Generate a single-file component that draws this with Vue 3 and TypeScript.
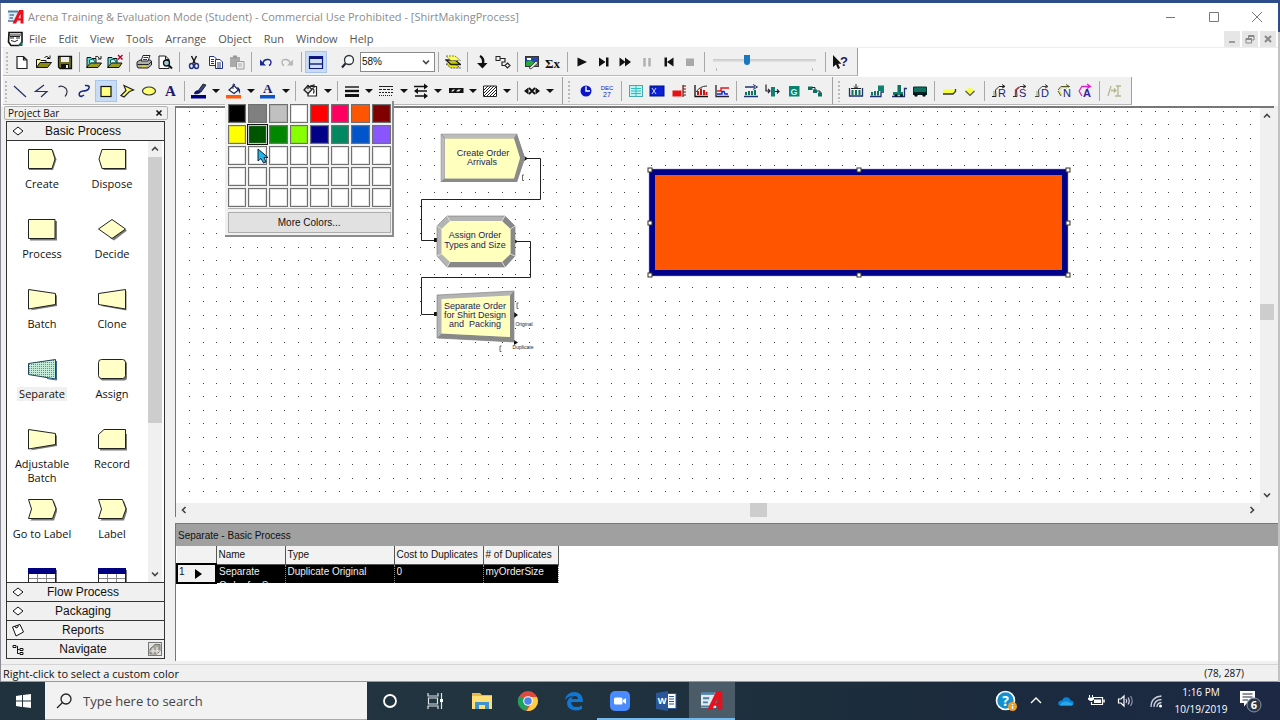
<script setup lang="ts">
import { ref } from 'vue'

interface Tool { icon: string; label: string; state?: 'on' | 'off' }
interface ModuleItem { icon: string; label: string; selected?: boolean }

const menus = ['File', 'Edit', 'View', 'Tools', 'Arrange', 'Object', 'Run', 'Window', 'Help']

const fileGroups: Tool[][] = [
  [{ icon: 'new', label: 'New' }, { icon: 'open', label: 'Open' }, { icon: 'save', label: 'Save' }],
  [{ icon: 'attach', label: 'Template attach' }, { icon: 'detach', label: 'Template detach' }],
  [{ icon: 'print', label: 'Print' }, { icon: 'preview', label: 'Print preview' }],
  [{ icon: 'cut', label: 'Cut' }, { icon: 'copy', label: 'Copy' }, { icon: 'paste', label: 'Paste', state: 'off' }],
  [{ icon: 'undo', label: 'Undo' }, { icon: 'redo', label: 'Redo', state: 'off' }],
  [{ icon: 'split', label: 'Toggle split screen', state: 'on' }],
]
const runGroups: Tool[][] = [
  [{ icon: 'layers', label: 'Layers' }],
  [{ icon: 'submodel', label: 'Submodel' }, { icon: 'connect', label: 'Connect' }],
  [{ icon: 'animate', label: 'Edit background' }, { icon: 'expr', label: 'Expression builder' }],
  [
    { icon: 'go', label: 'Go' }, { icon: 'step', label: 'Step' }, { icon: 'fast', label: 'Fast-forward' },
    { icon: 'pause', label: 'Pause', state: 'off' }, { icon: 'start', label: 'Start over' },
    { icon: 'stop', label: 'End', state: 'off' },
  ],
]
const drawTools: Tool[] = [
  { icon: 'line', label: 'Line' }, { icon: 'polyline', label: 'Polyline' }, { icon: 'arc', label: 'Arc' },
  { icon: 'bezier', label: 'Bezier curve' }, { icon: 'box', label: 'Box', state: 'on' },
  { icon: 'polygon', label: 'Polygon' }, { icon: 'ellipse', label: 'Ellipse' }, { icon: 'text', label: 'Text' },
]
const styleGroups: Tool[][] = [
  [{ icon: 'linecolor', label: 'Line color' }, { icon: 'fillcolor', label: 'Fill color' }, { icon: 'textcolor', label: 'Text color' }],
  [{ icon: 'background', label: 'Window background color' }],
  [
    { icon: 'linewidth', label: 'Line width' }, { icon: 'linestyle', label: 'Line style' },
    { icon: 'arrowstyle', label: 'Arrow style' }, { icon: 'linepattern', label: 'Line pattern' },
    { icon: 'fillpattern', label: 'Fill pattern' },
  ],
  [{ icon: 'showdim', label: 'Show dimensions' }],
]
const animateGroups: Tool[][] = [
  [{ icon: 'clock', label: 'Clock' }, { icon: 'date', label: 'Date' }],
  [
    { icon: 'variable', label: 'Variable' }, { icon: 'level', label: 'Level' }, { icon: 'thermo', label: 'Histogram' },
    { icon: 'histogram', label: 'Bar plot' }, { icon: 'plot', label: 'Plot' },
  ],
  [
    { icon: 'queue', label: 'Queue' }, { icon: 'resource', label: 'Resource' }, { icon: 'global', label: 'Global' },
    { icon: 'transporter', label: 'Entity' },
  ],
]
const transferGroups: Tool[][] = [
  [{ icon: 'storage', label: 'Storage' }, { icon: 'seize', label: 'Seize' }, { icon: 'parking', label: 'Parking' }, { icon: 'truck', label: 'Transporter' }],
  [{ icon: 'station', label: 'Station' }, { icon: 'intersection', label: 'Intersection' }],
  [{ icon: 'route', label: 'Route' }, { icon: 'segment', label: 'Segment' }, { icon: 'distance', label: 'Distance' }, { icon: 'network', label: 'Network' }, { icon: 'promote', label: 'Promote path' }],
  [{ icon: 'swap', label: 'Reverse path', state: 'off' }],
]

const swatches = [
  '#000000', '#808080', '#c0c0c0', '#ffffff', '#ff0000', '#ff0060', '#ff5500', '#800000',
  '#ffff00', '#005500', '#008800', '#88ff00', '#000088', '#008860', '#0055cc', '#8855ff',
  ...Array<string>(24).fill('#ffffff'),
]
const hovered = 9

const modules: ModuleItem[] = [
  { icon: 'm-create', label: 'Create' }, { icon: 'm-dispose', label: 'Dispose' },
  { icon: 'm-process', label: 'Process' }, { icon: 'm-decide', label: 'Decide' },
  { icon: 'm-batch', label: 'Batch' }, { icon: 'm-clone', label: 'Clone' },
  { icon: 'm-separate', label: 'Separate', selected: true }, { icon: 'm-assign', label: 'Assign' },
  { icon: 'm-batch', label: 'Adjustable Batch' }, { icon: 'm-record', label: 'Record' },
  { icon: 'm-label', label: 'Go to Label' }, { icon: 'm-label', label: 'Label' },
  { icon: 'm-table', label: '' }, { icon: 'm-table', label: '' },
]
const panels = [
  { icon: 'p-diamond', label: 'Flow Process' }, { icon: 'p-diamond', label: 'Packaging' },
  { icon: 'p-report', label: 'Reports' }, { icon: 'p-tree', label: 'Navigate' },
]

const handles = [649, 858, 1067].flatMap(x => [170, 223, 275].map(y => ({ x, y })))
  .filter(h => !(h.x === 858 && h.y === 223))

const apps = [
  { icon: 't-cortana', label: 'Cortana' }, { icon: 't-view', label: 'Task View' },
  { icon: 't-explorer', label: 'File Explorer' }, { icon: 't-chrome', label: 'Chrome' },
  { icon: 't-edge', label: 'Edge' }, { icon: 't-zoom', label: 'Zoom', open: true },
  { icon: 't-word', label: 'Word', open: true }, { icon: 'arena', label: 'Arena', open: true, active: true },
]
const tray = [
  { icon: 's-help', label: 'Get help' }, { icon: 's-up', label: 'Show hidden icons' },
  { icon: 's-cloud', label: 'OneDrive' }, { icon: 's-battery', label: 'Battery' },
  { icon: 's-sound', label: 'Volume' }, { icon: 's-wifi', label: 'Network' },
]

const zoomLevel = ref('58%')
const speed = ref(32)
const query = ref('')
</script>

<template>
  <div class="desktop">
    <svg class="sprite" aria-hidden="true">
      <symbol id="arena" viewBox="0 0 16 16">
        <rect x="0" y="2" width="11" height="11" fill="#dfeaf2" /><path d="M0 2.500H10" stroke="#4d83a5" stroke-width="2" />
        <path d="M1.500 6H6M1.500 9H5M0 12H8" stroke="#4d7f9f" stroke-width="1.400" />
        <path d="M11 1H15.500V14.500H12.500V11.500H9.500L8 14.500H4.500ZM12.500 5L10.500 9.300H12.500Z" fill="#e8101c" fill-rule="evenodd" />
      </symbol>
      <symbol id="doc" viewBox="0 0 16 16">
        <path d="M2 1.500H15V11L12 14.500H4L1.500 11Z" fill="#fff" stroke="#111" stroke-width="1.600" />
        <path d="M2 4H14M3 7H7M9 7H13M4 9.500Q8 12 11 9M3 5.500H13" stroke="#222" fill="none" />
        <path d="M11 15L15.500 10V15Z" fill="#087060" />
      </symbol>
      <symbol id="new" viewBox="0 0 16 16"><path d="M3 2.500H9.500L13 6V14.500H3ZM9.500 2.500V6H13" fill="#fff" stroke="#222" stroke-width="1.200" /></symbol>
      <symbol id="open" viewBox="0 0 16 16">
        <path d="M.5 13.500V5.500H4L5 6.500H10V8.500" fill="#ffff90" stroke="#111" /><path d="M.5 13.500L4 8.500H15.500L11.500 13.500Z" fill="#8a8a10" stroke="#111" />
        <path d="M8.500 3.500Q11 1 13 4M14 1.500V4.500H11" fill="none" stroke="#111" />
      </symbol>
      <symbol id="save" viewBox="0 0 16 16">
        <path d="M1.500 2.500H14.500V14.500H3L1.500 13Z" fill="#707020" stroke="#111" stroke-width="1.300" /><rect x="4" y="3" width="8" height="5" fill="#eee" /><rect x="4" y="10" width="8" height="4.500" fill="#111" /><rect x="9" y="11" width="2" height="3" fill="#eee" />
      </symbol>
      <symbol id="attach" viewBox="0 0 16 16">
        <path d="M1 13.500V3.500H5L6 4.500H10V9" fill="#60e0d8" stroke="#111" /><path d="M3.500 9V6L7 5L9 8" fill="#baf5f0" stroke="#155" />
        <path d="M.5 13.500L4.500 9H15.500L12 13.500Z" fill="#9a9a20" stroke="#111" /><path d="M9 3Q12 1 13.500 4.500M15 2V5H12" fill="none" stroke="#111" />
      </symbol>
      <symbol id="detach" viewBox="0 0 16 16">
        <path d="M1 13.500V3.500H5L6 4.500H10V9" fill="#60e0d8" stroke="#111" /><path d="M3.500 9V6L7 5L9 8" fill="#baf5f0" stroke="#155" />
        <path d="M.5 13.500L4.500 9H15L12 13.500Z" fill="#9a9a20" stroke="#111" /><path d="M11 1L15.500 5.500M15.500 1L11 5.500" stroke="#b00020" stroke-width="1.400" />
      </symbol>
      <symbol id="print" viewBox="0 0 16 16">
        <path d="M1 8L4 6H14L15.500 7V11L12 14H2L1 12Z" fill="#b0b0a8" stroke="#222" /><path d="M5 7L7 1.500H14L12 7Z" fill="#fff" stroke="#223" /><path d="M7.500 3.500H12M7 5.500H11" stroke="#335" />
        <path d="M1.500 10.500H12.500L15 8" stroke="#222" fill="none" /><rect x="6" y="11.500" width="4" height="1.500" fill="#e0d820" />
      </symbol>
      <symbol id="preview" viewBox="0 0 16 16">
        <path d="M2 2H8.500L12 5.500V14.500H2ZM8.500 2V5.500H12" fill="#fff" stroke="#222" /><circle cx="9.500" cy="9" r="3" fill="#9ccbd0" stroke="#111" stroke-width="1.300" /><path d="M12 11.500L15 14.500" stroke="#111" stroke-width="2" />
      </symbol>
      <symbol id="cut" viewBox="0 0 16 16">
        <path d="M5.500 2L9.500 10M10.500 2L6.500 10" stroke="#111" stroke-width="1.400" /><ellipse cx="5.500" cy="12" rx="2" ry="2.500" fill="none" stroke="#223080" stroke-width="1.400" /><ellipse cx="10.500" cy="12" rx="2" ry="2.500" fill="none" stroke="#223080" stroke-width="1.400" />
      </symbol>
      <symbol id="copy" viewBox="0 0 16 16">
        <path d="M1.500 2.500H6L8.500 5V11.500H1.500Z" fill="#fff" stroke="#223080" /><path d="M3 5.500H6M3 7.500H6M3 9.500H6" stroke="#223080" />
        <path d="M7.500 5.500H12L14.500 8V14.500H7.500Z" fill="#fff" stroke="#223080" /><path d="M9 9H13M9 11H13M9 13H13" stroke="#223080" />
      </symbol>
      <symbol id="paste" viewBox="0 0 16 16">
        <path d="M1 3H11V13H1Z" fill="#aaa" /><rect x="4" y="1.500" width="4" height="3" fill="#999" /><path d="M7.500 7.500H15V15H7.500Z" fill="#eee" stroke="#999" /><path d="M9 10H13M9 12H13" stroke="#aaa" />
      </symbol>
      <symbol id="undo" viewBox="0 0 16 16"><path d="M5 10Q5 6 9 5.500Q13 5 13 8.500Q13 10.500 11 11.500" fill="none" stroke="#1a2a90" stroke-width="1.400" /><path d="M2 5.500V11.500H8Z" fill="#1a2a90" /></symbol>
      <symbol id="redo" viewBox="0 0 16 16"><path d="M11 10Q11 6 7 5.500Q3 5 3 8.500Q3 10.500 5 11.500" fill="none" stroke="#b4b4b4" stroke-width="1.400" /><path d="M14 5.500V11.500H8Z" fill="#b8b8b8" /></symbol>
      <symbol id="split" viewBox="0 0 16 16"><path d="M1.500 2.500H14.500V14.500H1.500Z" fill="#cfe0f6" stroke="#101a80" stroke-width="1.200" /><path d="M1.500 4H14.500" stroke="#0a1280" stroke-width="2" /><path d="M1.500 10H14.500" stroke="#101a80" stroke-width="1.400" /></symbol>
      <symbol id="mag" viewBox="0 0 16 16"><circle cx="9" cy="6" r="4.500" fill="#f4fafc" stroke="#333" stroke-width="1.300" /><path d="M5.500 9.500L2 13.500" stroke="#223" stroke-width="2" /></symbol>
      <symbol id="layers" viewBox="0 0 16 16">
        <path d="M1 10H10L15.500 14H6Z" fill="#e8e800" stroke="#555" stroke-dasharray="2 1" /><path d="M1 6H10L15.500 10.500H6Z" fill="#c8c800" stroke="#222" stroke-width="1.300" /><path d="M1 2H10L15.500 6.500H6Z" fill="#ffff50" stroke="#777" stroke-dasharray="2 1" />
      </symbol>
      <symbol id="submodel" viewBox="0 0 16 16"><path d="M6 2Q10 4 9 10" fill="none" stroke="#111" stroke-width="2.500" /><path d="M3 9H13.500L8.500 14.500Z" fill="#111" /></symbol>
      <symbol id="connect" viewBox="0 0 16 16"><rect x="1" y="2.500" width="4" height="4" fill="none" stroke="#222" /><path d="M5 4.500H10V8H7V11.500H10" fill="none" stroke="#222" stroke-width="1.200" /><path d="M12.500 9L15 11.500L12.500 14L10 11.500Z" fill="none" stroke="#222" stroke-width="1.200" /></symbol>
      <symbol id="animate" viewBox="0 0 16 16">
        <rect x="1.500" y="2.500" width="13" height="10" fill="#2448b0" stroke="#333" /><path d="M2 12V8L6 6L11 9L14 7V12Z" fill="#28a838" /><path d="M3 4H7V6H3Z" fill="#fff" /><path d="M5 14L12 7L14 9L7 15Z" fill="#ddd" stroke="#333" stroke-width=".8" />
      </symbol>
      <symbol id="expr" viewBox="0 0 16 16"><text x="0" y="14" font-family="Liberation Serif, serif" font-weight="700" font-size="13" fill="#111">Σx</text></symbol>
      <symbol id="go" viewBox="0 0 16 16"><path d="M3.500 3.500L13 8L3.500 12.500Z" fill="#111" /></symbol>
      <symbol id="step" viewBox="0 0 16 16"><path d="M3 3.500L9.500 8L3 12.500Z" fill="#111" /><rect x="10" y="3.500" width="2.500" height="9" fill="#111" /></symbol>
      <symbol id="fast" viewBox="0 0 16 16"><path d="M2.500 3.500L8.500 8L2.500 12.500ZM8 3.500L14 8L8 12.500Z" fill="#111" /></symbol>
      <symbol id="pause" viewBox="0 0 16 16"><path d="M5.500 4V12.500M10.500 4V12.500" stroke="#b0b0b0" stroke-width="2.500" /></symbol>
      <symbol id="start" viewBox="0 0 16 16"><rect x="3.500" y="3.500" width="2.500" height="9" fill="#111" /><path d="M12.500 3.500L6 8L12.500 12.500Z" fill="#111" /></symbol>
      <symbol id="stop" viewBox="0 0 16 16"><rect x="4" y="4.500" width="8" height="7.500" fill="#a8a8a8" /></symbol>
      <symbol id="help" viewBox="0 0 16 16"><path d="M1 1V13L4 10.500L6 15L8 14L6 9.800H9.500Z" fill="#111" /><text x="8" y="12" font-family="Liberation Sans, sans-serif" font-weight="700" font-size="13" fill="#1a1a5c">?</text></symbol>

      <symbol id="line" viewBox="0 0 16 16"><path d="M2 3L14 14" stroke="#223068" stroke-width="1.200" /></symbol>
      <symbol id="polyline" viewBox="0 0 16 16"><path d="M11 2L2.500 8.500H14L8 14" fill="none" stroke="#223068" stroke-width="1.200" /></symbol>
      <symbol id="arc" viewBox="0 0 16 16"><path d="M3.500 4Q7 1.500 11 5.500Q13.500 9 10 13.500" fill="none" stroke="#334" stroke-width="1.200" /></symbol>
      <symbol id="bezier" viewBox="0 0 16 16"><path d="M9 2.500Q15 2 12.500 6Q11 8 7 8Q2 9 3.500 12.500Q5 14.500 8 12" fill="none" stroke="#1a2a80" stroke-width="1.600" /></symbol>
      <symbol id="box" viewBox="0 0 16 16"><rect x="3" y="3.500" width="10" height="10" fill="#ffff80" stroke="#111" stroke-width="1.200" /></symbol>
      <symbol id="polygon" viewBox="0 0 16 16"><path d="M5 2.500L14.500 7L10.500 8.500L5 14L2 12.500L7 7.500Z" fill="#ffff60" stroke="#222" stroke-width="1.200" /></symbol>
      <symbol id="ellipse" viewBox="0 0 16 16"><ellipse cx="8" cy="8" rx="6.500" ry="4" fill="#ffff70" stroke="#333" stroke-width="1.200" /></symbol>
      <symbol id="text" viewBox="0 0 16 16"><text x="3" y="13" font-family="Liberation Serif, serif" font-weight="700" font-size="15" fill="#1a1a70">A</text></symbol>
      <symbol id="linecolor" viewBox="0 0 16 16"><rect x="0" y="12" width="15" height="3.500" fill="#000080" /><path d="M7 8L12 1L15 2L10 9Z" fill="#334488" stroke="#111" stroke-width=".8" /><path d="M3 11Q4 6.500 8 7.500L10 9Q8 12 3 11Z" fill="#111a60" /></symbol>
      <symbol id="fillcolor" viewBox="0 0 16 16"><rect x="0" y="12" width="15" height="3.500" fill="#ff5a10" /><path d="M3 7L8 2.500L12.500 7L8 10.500Z" fill="#fff" stroke="#1a2050" stroke-width="1.200" /><path d="M7 6V1.500Q8 0 9 2" fill="none" stroke="#1a2050" /><path d="M11 4Q15 5 14 11L12 7Z" fill="#16206c" /></symbol>
      <symbol id="textcolor" viewBox="0 0 16 16"><rect x="0" y="12" width="15" height="3.500" fill="#0a56c8" /><text x="3" y="10" font-family="Liberation Serif, serif" font-weight="700" font-size="13" fill="#1a1a70">A</text></symbol>
      <symbol id="background" viewBox="0 0 16 16"><path d="M6 3.500H14.500V13H6Z" fill="#fff" stroke="#222" stroke-width="1.200" /><path d="M2 7L6 2.500L10 6.500L6 10.500Z" fill="#ddd" stroke="#222" stroke-width="1.300" /><path d="M6 6V2M10 5Q13 6 11.500 10.500M8 3L12 2V5" fill="none" stroke="#222" stroke-width="1.200" /></symbol>
      <symbol id="linewidth" viewBox="0 0 16 16"><path d="M1 4H15" stroke="#111" stroke-width="1.400" /><path d="M1 8H15" stroke="#111" stroke-width="2.400" /><path d="M1 12.500H15" stroke="#111" stroke-width="3" /></symbol>
      <symbol id="linestyle" viewBox="0 0 16 16"><path d="M1 3.500H15" stroke="#222" /><path d="M1 6.500H15" stroke="#222" stroke-dasharray="3 1" /><path d="M1 9.500H15" stroke="#222" stroke-dasharray="2 1" /><path d="M1 12.500H15" stroke="#222" stroke-dasharray="1 1" /></symbol>
      <symbol id="arrowstyle" viewBox="0 0 16 16"><path d="M1 3.500H14M2 8H14M2 13H14" stroke="#111" stroke-width="1.300" /><path d="M11 .5L15 3.500L11 6.500ZM5 5L1 8L5 11ZM11 10L15 13L11 16Z" fill="#111" /></symbol>
      <symbol id="linepattern" viewBox="0 0 16 16"><rect x="1" y="5" width="14.500" height="5" fill="#111" /><path d="M3 8.500L5 6.500H7L5 8.500ZM8 8.500L10 6.500H13L11 8.500Z" fill="#eee" /></symbol>
      <symbol id="fillpattern" viewBox="0 0 16 16"><path d="M1.500 3H14.500V13.500H1.500Z" fill="#fff" stroke="#222" /><path d="M2 7L6 3M2 10L9 3M2 13L12 3M5 13L14 4M8 13L14 7M11 13L14 10" stroke="#222" /></symbol>
      <symbol id="showdim" viewBox="0 0 16 16"><path d="M0 8L4.500 4.500V11.500ZM16 8L11.500 4.500V11.500Z" fill="#111" /><path d="M5 5L11 11M11 5L5 11" stroke="#111" stroke-width="1.800" /></symbol>

      <symbol id="clock" viewBox="0 0 16 16"><circle cx="8" cy="8" r="5.500" fill="#0a14c8" /><path d="M8 3.500V8H12" stroke="#fff" stroke-width="1.400" fill="none" /></symbol>
      <symbol id="date" viewBox="0 0 16 16"><text x="8" y="7" text-anchor="middle" font-family="Liberation Sans, sans-serif" font-size="6" fill="#1818c0">DEC</text><text x="8" y="14" text-anchor="middle" font-family="Liberation Sans, sans-serif" font-size="7" fill="#1818c0">27</text></symbol>
      <symbol id="variable" viewBox="0 0 16 16"><rect x="1.500" y="2.500" width="13" height="11" fill="#bff4f4" stroke="#4aa" /><path d="M3 5.500H13M3 8H13M3 10.500H13M8 3V13" stroke="#3bb" /></symbol>
      <symbol id="level" viewBox="0 0 16 16"><rect x="1" y="3" width="14" height="10" fill="#0a20d8" stroke="#001080" /><path d="M3 5L7 11M7 5L3 11" stroke="#cde" /></symbol>
      <symbol id="thermo" viewBox="0 0 16 16"><rect x="1.500" y="7.500" width="9" height="6" fill="#e81010" /><path d="M12 2V14M12 3H15M12 6H15M12 9H15M12 12H15" stroke="#701010" stroke-width="1.200" /></symbol>
      <symbol id="histogram" viewBox="0 0 16 16"><path d="M2 2V13.500H15" stroke="#111" fill="none" stroke-width="1.300" /><path d="M5 12V8M8 12V5.500M11 12V7M13.500 12V9" stroke="#c01818" stroke-width="2" /><path d="M3 9Q7 3 14 3" fill="none" stroke="#333" /></symbol>
      <symbol id="plot" viewBox="0 0 16 16"><path d="M2 2V13.500H15" stroke="#223" fill="none" stroke-width="1.300" /><path d="M3 8H7V5H15" fill="none" stroke="#e01818" stroke-width="1.400" /><path d="M3 11H8V8.500H10L11 11H14" fill="none" stroke="#1820c0" stroke-width="1.400" /></symbol>
      <symbol id="queue" viewBox="0 0 16 16"><path d="M1 13.500H15M2 4H12" stroke="#223070" stroke-width="1.300" /><path d="M10 1.500L14.500 4L10 6.500" fill="none" stroke="#223070" /><path d="M3 12V9M6 12V8M9 12V8M12 12V7" stroke="#107060" stroke-width="2" /></symbol>
      <symbol id="resource" viewBox="0 0 16 16"><path d="M2 1.500V8H5M4 6L6 8L4 10" fill="none" stroke="#223" stroke-width="1.200" /><rect x="7" y="4" width="4" height="9.500" fill="#108070" /><path d="M11 8.500H15M13 6.500L15 8.500L13 10.500" fill="none" stroke="#223" stroke-width="1.200" /></symbol>
      <symbol id="global" viewBox="0 0 16 16"><rect x="3" y="3" width="10.500" height="10.500" fill="#0a8070" /><text x="8" y="12" text-anchor="middle" font-family="Liberation Sans, sans-serif" font-weight="700" font-size="9" fill="#bff">G</text></symbol>
      <symbol id="transporter" viewBox="0 0 16 16"><path d="M1 3.500H5.500V7H1ZM6 6.500H10V10H6ZM11 9.500H15V13.500H11Z" fill="#0a7060" /><path d="M5 4.500H8V7M10 8H13V10" fill="none" stroke="#223" /></symbol>
      <symbol id="storage" viewBox="0 0 16 16"><path d="M1.500 5V13H14.500V5" fill="none" stroke="#223070" stroke-width="1.300" /><path d="M4.500 12V7M8 12V7M11.500 12V7" stroke="#107060" stroke-width="2" /><path d="M8 1V5M6 3.500L8 5.500L10 3.500M3 5.500H13" fill="none" stroke="#222" /></symbol>
      <symbol id="seize" viewBox="0 0 16 16"><rect x="9" y="2.500" width="6" height="5.500" fill="#108070" /><path d="M1 13.500H12V9H15" stroke="#223070" fill="none" stroke-width="1.300" /><path d="M3 12.500V9M6 12.500V8M9 12.500V8" stroke="#107060" stroke-width="2" /></symbol>
      <symbol id="parking" viewBox="0 0 16 16"><path d="M1 13.500H13.500V5.500H16" stroke="#223070" fill="none" stroke-width="1.300" /><path d="M2 12V9H12V12Z" fill="#108070" /><circle cx="5" cy="12.500" r="1.500" fill="#111" /><circle cx="10.500" cy="12.500" r="1.500" fill="#111" /><path d="M6.500 2H10V9H6.500Z" fill="#107060" /></symbol>
      <symbol id="truck" viewBox="0 0 16 16"><path d="M1.500 4H14.500V11H1.500Z" fill="#107060" stroke="#033" /><path d="M1 9H15V12H1Z" fill="#022" /><circle cx="4" cy="12" r="1.800" fill="#111" /><circle cx="12" cy="12" r="1.800" fill="#111" /></symbol>
      <symbol id="station" viewBox="0 0 16 16"><path d="M2 6.500H14V8.500L12 11H2Z" fill="#f4ff40" /><path d="M2 11H12L14.500 8.500V6" fill="none" stroke="#333" stroke-width="1.300" /></symbol>
      <symbol id="intersection" viewBox="0 0 16 16"><path d="M8 4L12.500 8L8 12.500L3.500 8Z" fill="#f4ff40" /><path d="M3.500 8L8 12.500L12.500 8" fill="none" stroke="#555" stroke-width="1.200" /></symbol>
      <symbol id="route" viewBox="0 0 16 16"><path d="M1 13.500H5L4.500 7L8 3.500H14M11 1.500L14 3.500L11 5" fill="none" stroke="#222" /><path d="M3 13V8" stroke="#8a9a50" fill="none" /><text x="7" y="14" font-family="Liberation Sans, sans-serif" font-size="11" fill="#22227c">R</text></symbol>
      <symbol id="segment" viewBox="0 0 16 16"><path d="M1 13.500H5L4.500 7L8 3.500H14M11 1.500L14 3.500L11 5" fill="none" stroke="#333" /><path d="M3.500 13V7L7 4" stroke="#e02020" fill="none" stroke-width="1.300" /><text x="7" y="14" font-family="Liberation Sans, sans-serif" font-size="11" fill="#22227c">S</text></symbol>
      <symbol id="distance" viewBox="0 0 16 16"><path d="M1 13.500H5L4.500 7L8 3.500H14M11 1.500L14 3.500L11 5" fill="none" stroke="#444" /><path d="M3 13V8" stroke="#8aaa60" fill="none" /><text x="7" y="14" font-family="Liberation Sans, sans-serif" font-size="11" fill="#22227c">D</text></symbol>
      <symbol id="network" viewBox="0 0 16 16"><path d="M2 7L5 3.500H13M10 1.500L13.500 3.500L10 5M2 8L5 13" fill="none" stroke="#555520" /><path d="M3 8L6 4.500H12M3.500 8L6 12" stroke="#d8e020" fill="none" /><text x="7" y="14" font-family="Liberation Sans, sans-serif" font-size="11" fill="#22227c">N</text></symbol>
      <symbol id="promote" viewBox="0 0 16 16"><path d="M2 8L5 3.500H13M10 1L13.500 3.500L10 5.500M2 8L5 13" fill="none" stroke="#e020d0" stroke-width="1.300" /><text x="6" y="14" font-family="Liberation Sans, sans-serif" font-weight="700" font-size="11" fill="#3a1ca0">A</text></symbol>
      <symbol id="swap" viewBox="0 0 16 16"><path d="M2 13L5 3M5 7.500H10M8 5.500L10 7.500L8 9.500M10 3H15M12 3V13M9 13H15" fill="none" stroke="#b4b890" stroke-width="1.300" /></symbol>

      <symbol id="m-create" viewBox="0 0 30 23"><path d="M2 2H26L29.500 11.500L26 22H2Z" fill="#777" /><path d="M1.500 1.500H25L28 11L25 20.500H1.500Z" fill="#ffffc8" stroke="#222" /></symbol>
      <symbol id="m-dispose" viewBox="0 0 30 23"><path d="M6 22H29.500V2H27Z" fill="#777" /><path d="M28.500 1.500H5L2 11L5 20.500H28.500Z" fill="#ffffc8" stroke="#222" /></symbol>
      <symbol id="m-process" viewBox="0 0 30 23"><path d="M3 3H30V22.500H3Z" fill="#777" /><path d="M1.500 1.500H28V20.500H1.500Z" fill="#ffffc8" stroke="#222" /></symbol>
      <symbol id="m-decide" viewBox="0 0 30 23"><path d="M15 3L30 12.500L17 22.500L13 20Z" fill="#777" /><path d="M15 1.500L28.500 11L15 20.500L1.500 11Z" fill="#ffffc8" stroke="#222" /></symbol>
      <symbol id="m-batch" viewBox="0 0 30 23"><path d="M3 22.500L30 18V7Z" fill="#777" /><path d="M1.500 1.500L28.500 5.500V16.500L1.500 21Z" fill="#ffffc8" stroke="#222" /></symbol>
      <symbol id="m-clone" viewBox="0 0 30 23"><path d="M4 18L29.500 22.500V3Z" fill="#777" /><path d="M28.500 1.500L1.500 5.500V16.500L28.500 21Z" fill="#ffffc8" stroke="#222" /></symbol>
      <symbol id="m-separate" viewBox="0 0 30 23"><path d="M28.500 1.500L1.500 5.500V16.500L28.500 21Z" fill="url(#dither)" stroke="#245" /><path d="M29.500 3V22L20 20.500" fill="none" stroke="#356a98" /></symbol>
      <symbol id="m-assign" viewBox="0 0 30 23"><rect x="3" y="3" width="27" height="19.500" rx="3" fill="#777" /><rect x="1.500" y="1.500" width="27" height="19" rx="3" fill="#ffffc8" stroke="#222" /></symbol>
      <symbol id="m-record" viewBox="0 0 30 23"><path d="M3 6H30V22.500H3Z" fill="#777" /><path d="M7 1.500H28.500V20.500H1.500V6.500Z" fill="#ffffc8" stroke="#222" /></symbol>
      <symbol id="m-label" viewBox="0 0 30 23"><path d="M3 22.500H27L30.500 12L27 3Z" fill="#777" /><path d="M1.500 1.500H25.500L29 11L25.500 20.500H1.500L4.500 11Z" fill="#ffffc8" stroke="#222" /></symbol>
      <symbol id="m-table" viewBox="0 0 30 23"><rect x="3" y="2" width="27" height="21" fill="#777" /><rect x="1.500" y=".5" width="27" height="22" fill="#fff" stroke="#222" /><rect x="1" y="0" width="28" height="6" fill="#000080" /><path d="M2 10.500H28M2 14.500H28M10.500 6V22M19.500 6V22" stroke="#888" /></symbol>
      <symbol id="p-diamond" viewBox="0 0 14 14"><path d="M7 3L12 7L7 11L2 7Z" fill="#fff" stroke="#111" /></symbol>
      <symbol id="p-report" viewBox="0 0 14 14"><path d="M1.500 4L9 1.500L12.500 9L5 13Z" fill="#fff" stroke="#111" /><path d="M4 3L5 5L7 4V2" fill="none" stroke="#111" /></symbol>
      <symbol id="p-tree" viewBox="0 0 14 14"><path d="M2 3.500H5V5.500H2ZM9 6.500H12V8.500H9ZM9 10.500H12V12.500H9Z" fill="#fff" stroke="#111" /><path d="M6.500 4V11.500H8.500M6.500 7.500H8.500" fill="none" stroke="#111" /></symbol>
      <symbol id="p-book" viewBox="0 0 14 14"><rect x=".5" y=".5" width="13" height="13" fill="#e4e4de" stroke="#777" /><path d="M2 12V7L7 2.500H12V9L9 12Z" fill="#aaa79a" stroke="#777" /><path d="M5 12V6M9 12V5M2 9H12" stroke="#eee" /></symbol>

      <symbol id="up" viewBox="0 0 10 10"><path d="M2 6.500L5 3.500L8 6.500" fill="none" stroke="#444" stroke-width="1.600" /></symbol>
      <symbol id="down" viewBox="0 0 10 10"><path d="M2 3.500L5 6.500L8 3.500" fill="none" stroke="#444" stroke-width="1.600" /></symbol>
      <symbol id="left" viewBox="0 0 10 10"><path d="M6.500 2L3.500 5L6.500 8" fill="none" stroke="#444" stroke-width="1.600" /></symbol>
      <symbol id="right" viewBox="0 0 10 10"><path d="M3.500 2L6.500 5L3.500 8" fill="none" stroke="#444" stroke-width="1.600" /></symbol>

      <symbol id="t-cortana" viewBox="0 0 22 22"><circle cx="11" cy="11" r="6" fill="none" stroke="#fff" stroke-width="1.800" /></symbol>
      <symbol id="t-view" viewBox="0 0 22 22"><path d="M3 3V6H13V3M3 19V16H13V19M3.500 8H12.500V14H3.500Z" fill="none" stroke="#dde3e8" stroke-width="1.200" /><path d="M16.500 3V19" stroke="#dde3e8" stroke-width="1.200" /><rect x="15" y="9" width="3" height="3" fill="#fff" /></symbol>
      <symbol id="t-explorer" viewBox="0 0 22 22"><path d="M1 3H9L11 5H21V19H1Z" fill="#e8b84a" /><path d="M1 6H21V19H1Z" fill="#ffdd77" /><path d="M4 12H18V19H14V15H8V19H4Z" fill="#3c94d0" /></symbol>
      <symbol id="t-chrome" viewBox="0 0 22 22"><circle cx="11" cy="11" r="10" fill="#dd4b3e" /><path d="M2.300 6L11 11L9 21A10 10 0 0 1 2.300 6Z" fill="#1fa05c" /><path d="M11 7H20A10 10 0 0 1 9.500 21L14.500 13Z" fill="#ffcd43" /><circle cx="11" cy="11" r="4.800" fill="#fff" /><circle cx="11" cy="11" r="3.800" fill="#4a86ec" /></symbol>
      <symbol id="t-edge" viewBox="0 0 22 22"><path d="M2 10Q3.500 2 11.500 2Q20 2.500 20 12H8Q8.500 17 13 17Q16.500 17 19 15.500V19Q16 20.500 12.500 20.500Q4 20 4 13Q4.500 8 10 6Q5 6 2 10ZM8.500 9H15Q15 6 12 6Q9 6 8.500 9Z" fill="#1078d4" /></symbol>
      <symbol id="t-zoom" viewBox="0 0 22 22"><rect x="1" y="1" width="20" height="20" rx="5" fill="#4a8cff" /><rect x="5" y="7.500" width="8.500" height="7" rx="1.500" fill="#fff" /><path d="M14 10L17 8V14L14 12Z" fill="#fff" /></symbol>
      <symbol id="t-word" viewBox="0 0 22 22"><rect x="10" y="3.500" width="11" height="15" fill="#fff" stroke="#2b579a" /><path d="M14 6.500H19M14 9H19M14 11.500H19M14 14H19" stroke="#2b579a" /><path d="M1 3L13 1V21L1 19Z" fill="#2b579a" /><text x="7" y="14" text-anchor="middle" font-family="Open Sans, sans-serif" font-weight="700" font-size="9" fill="#fff">W</text></symbol>

      <symbol id="s-help" viewBox="0 0 22 22"><circle cx="10.500" cy="10.500" r="9" fill="#1490d0" stroke="#fff" stroke-width="1.600" /><text x="10.500" y="16" text-anchor="middle" font-family="Open Sans, sans-serif" font-weight="700" font-size="14" fill="#fff">?</text><circle cx="17.500" cy="16.500" r="4.500" fill="#f0a020" /><path d="M17.500 14V15M17.500 16V19" stroke="#fff" stroke-width="1.300" /></symbol>
      <symbol id="s-up" viewBox="0 0 22 22"><path d="M6 13L11 8L16 13" fill="none" stroke="#fff" stroke-width="1.400" /></symbol>
      <symbol id="s-cloud" viewBox="0 0 22 22"><path d="M5 15.500Q2.500 15 3.500 12Q4.500 10 7 10.500Q9 6 13 7.500Q15 8 15.500 10.500Q19 10.500 18.500 13.500Q18 15.500 16 15.500Z" fill="#0a84d8" /><path d="M5 15.500Q7 11 12 11.500L18 14Q17 15.500 16 15.500Z" fill="#28a8ea" /></symbol>
      <symbol id="s-battery" viewBox="0 0 22 22"><path d="M8 7.500H17.500V14.500H6.500V12" fill="none" stroke="#fff" stroke-width="1.200" /><rect x="9" y="9.500" width="7" height="3.500" fill="#fff" /><path d="M19 9.500V12.500" stroke="#fff" stroke-width="1.500" /><path d="M4.500 5V7.500M7.500 5V7.500M3.500 8H8.500V9.500Q6 12 3.500 9.500Z" stroke="#fff" fill="#fff" /></symbol>
      <symbol id="s-sound" viewBox="0 0 22 22"><path d="M3.500 9H6L9 6V16L6 13H3.500Z" fill="none" stroke="#fff" stroke-width="1.200" /><path d="M11 9Q12.500 11 11 13M13 7.500Q15.500 11 13 14.500" fill="none" stroke="#dde" stroke-width="1.200" /><path d="M15.500 6Q19 11 15.500 16" fill="none" stroke="#8894a8" stroke-width="1.200" /></symbol>
      <symbol id="s-wifi" viewBox="0 0 22 22"><path d="M6 17Q6 7 16.500 6M9 17Q9 10 16.500 9.500M12 17Q12 13 16.500 12.500" fill="none" stroke="#c8cfda" stroke-width="1.300" /><circle cx="15.500" cy="16" r="1.500" fill="#fff" /></symbol>
    </svg>

    <main class="window">
      <header class="titlebar">
        <svg class="i16"><use href="#arena" /></svg>
        <h1>Arena Training &amp; Evaluation Mode (Student) - Commercial Use Prohibited - [ShirtMakingProcess]</h1>
        <div class="caption">
          <button aria-label="Minimize"><svg class="i10" viewBox="0 0 10 10"><path d="M0 5.500H9" stroke="#777" /></svg></button>
          <button aria-label="Maximize"><svg class="i10" viewBox="0 0 10 10"><path d="M.5 .5H9.500V9.500H.5Z" fill="none" stroke="#777" /></svg></button>
          <button aria-label="Close"><svg class="i10" viewBox="0 0 10 10"><path d="M0 0L10 10M10 0L0 10" stroke="#777" /></svg></button>
        </div>
      </header>

      <nav class="menubar">
        <svg class="i16"><use href="#doc" /></svg>
        <button v-for="m in menus" :key="m">{{ m }}</button>
        <div class="mdi">
          <button aria-label="Minimize document"><svg class="i10" viewBox="0 0 10 10"><path d="M2 8H8" stroke="#888" stroke-width="1.600" /></svg></button>
          <button aria-label="Restore document"><svg class="i10" viewBox="0 0 10 10"><path d="M3.500 4V1.500H9V6H7M1 4.500H6.500V9H1ZM1 5.500H6.500M3.500 2.500H9" fill="none" stroke="#888" /></svg></button>
          <button aria-label="Close document"><svg class="i10" viewBox="0 0 10 10"><path d="M2 2L8 8M8 2L2 8" stroke="#888" stroke-width="2" /></svg></button>
        </div>
      </nav>

      <div class="toolrow">
        <div class="band">
          <span class="grip"></span>
          <template v-for="(g, gi) in fileGroups" :key="gi">
            <span v-if="gi" class="sep"></span>
            <div class="group" :class="'n' + g.length">
              <button v-for="t in g" :key="t.icon" class="tool" :class="t.state" :aria-label="t.label"><svg class="i16"><use :href="'#' + t.icon" /></svg></button>
            </div>
          </template>
          <label class="zoom" for="zoom" aria-label="Zoom"><svg class="i16"><use href="#mag" /></svg></label>
          <div class="combo">
            <select id="zoom" v-model="zoomLevel"><option>58%</option><option>100%</option></select>
            <svg class="i10"><use href="#down" /></svg>
          </div>
          <template v-for="(g, gi) in runGroups" :key="gi">
            <span class="sep"></span>
            <div class="group" :class="'n' + g.length">
              <button v-for="t in g" :key="t.icon" class="tool" :class="t.state" :aria-label="t.label"><svg class="i16"><use :href="'#' + t.icon" /></svg></button>
            </div>
          </template>
          <span class="sep"></span>
          <input v-model="speed" class="speed" type="range" aria-label="Animation speed" min="0" max="100">
          <span class="sep"></span>
          <div class="group n1"><button class="tool" aria-label="Context help"><svg class="i16"><use href="#help" /></svg></button></div>
        </div>
      </div>

      <div class="toolrow">
        <div class="band">
          <span class="grip tight"></span>
          <div class="group n8">
            <button v-for="t in drawTools" :key="t.icon" class="tool" :class="t.state" :aria-label="t.label"><svg class="i16"><use :href="'#' + t.icon" /></svg></button>
          </div>
          <template v-for="(g, gi) in styleGroups" :key="gi">
            <span class="sep"></span>
            <div class="group" :class="'d' + g.length">
              <div v-for="t in g" :key="t.icon" class="drop">
                <button class="tool" :aria-label="t.label"><svg class="i16"><use :href="'#' + t.icon" /></svg></button>
                <button class="arrow" :aria-label="t.label + ' options'"></button>
                <div v-if="t.icon === 'fillcolor'" class="palette">
                  <div class="swatches">
                    <button v-for="(c, i) in swatches" :key="i" :class="{ hot: i === hovered }" :style="{ background: c }" :aria-label="'Color ' + (i + 1)"></button>
                  </div>
                  <button class="more">More Colors...</button>
                  <svg class="cursor" viewBox="0 0 12 16"><path d="M1 1V13L4 10.500L6.500 15L9 14L7 9.500H11Z" fill="#20b4f0" stroke="#123" /></svg>
                </div>
              </div>
            </div>
          </template>
        </div>
        <div v-for="(band, bi) in [animateGroups, transferGroups]" :key="bi" class="band">
          <span class="grip wide"></span>
          <template v-for="(g, gi) in band" :key="gi">
            <span v-if="gi" class="sep"></span>
            <div class="group" :class="'n' + g.length">
              <button v-for="t in g" :key="t.icon" class="tool" :class="t.state" :aria-label="t.label"><svg class="i16"><use :href="'#' + t.icon" /></svg></button>
            </div>
          </template>
        </div>
      </div>

      <div class="workspace">
        <aside class="project">
          <div class="project-head"><span>Project Bar</span><button aria-label="Close project bar"><svg class="i10" viewBox="0 0 10 10"><path d="M2.500 2.500L7.500 7.500M7.500 2.500L2.500 7.500" stroke="#111" stroke-width="1.600" /></svg></button></div>
          <div class="project-body">
            <button class="panel"><svg class="i14"><use href="#p-diamond" /></svg><span>Basic Process</span></button>
            <div class="shelf">
              <ul class="modules">
                <li v-for="(m, i) in modules" :key="i" :class="{ selected: m.selected }">
                  <svg class="glyph"><use :href="'#' + m.icon" /></svg><span v-if="m.label">{{ m.label }}</span>
                </li>
              </ul>
              <div class="vbar">
                <button aria-label="Scroll up"><svg class="i10"><use href="#up" /></svg></button>
                <div class="track"><div class="thumb tall"></div></div>
                <button aria-label="Scroll down"><svg class="i10"><use href="#down" /></svg></button>
              </div>
            </div>
            <button v-for="p in panels" :key="p.label" class="panel">
              <svg class="i14"><use :href="'#' + p.icon" /></svg><span>{{ p.label }}</span>
              <svg v-if="p.label === 'Navigate'" class="i14"><use href="#p-book" /></svg>
            </button>
          </div>
        </aside>

        <div class="model">
          <section class="canvas-pane">
            <svg class="canvas" role="img" aria-label="Model flowchart">
              <defs>
                <pattern id="dither" width="2" height="2" patternUnits="userSpaceOnUse"><rect width="2" height="2" fill="#c4ecd8" /><rect width="1" height="1" fill="#4a9a8c" /></pattern>
                <pattern id="grid" x="189" y="111" width="68" height="68" patternUnits="userSpaceOnUse">
                  <template v-for="y in [0, 13, 27, 40, 54]" :key="y">
                    <rect v-for="x in [0, 14, 27, 41, 54]" :key="x" :x="x" :y="y" width="1" height="1" fill="#444" />
                  </template>
                </pattern>
              </defs>
              <g transform="translate(-176 -108)">
                <rect x="186" y="108" width="1070" height="388" fill="url(#grid)" />
                <g class="wire">
                  <path d="M525 158.500H540.500V199.500H421.500V240.500H437" /><path d="M515 241.500H530.500V277.500H421.500V314.500H437" />
                </g>
                <path class="port" d="M524 156L528 158.500L524 161ZM434 238H438V242H434ZM514 239L518 241.500L514 244ZM434 312H438V316H434ZM514 312L518 315L514 318ZM514 340L518 342.500L514 345Z" />
                <g>
                  <path d="M441 134H517L525 158L517 182H441Z" fill="#a4a4a4" /><path d="M441 134V182L445 178.500V138.500ZM441 134H517L514 138.500H445Z" fill="#bcbcbc" stroke="#8a8a8a" stroke-width=".5" />
                  <path d="M441 182H517L525 158L517 134L514 138.500L520 158L514 178.500H445Z" fill="#8a8a8a" /><path d="M445 138.500H514L520 158L514 178.500H445Z" fill="#ffffbe" />
                  <text x="483" y="156">Create Order</text><text x="482" y="165">Arrivals</text>
                </g>
                <g>
                  <path d="M447 216H505L515 226V256L505 267H447L437 256V226Z" fill="#b4b4b4" stroke="#777" stroke-width=".6" /><path d="M505 216L515 226V256L505 267H447L450 262H502L510.500 254V229L502 221Z" fill="#888" />
                  <path d="M450 221H502L510.500 229V254L502 262H450L441.500 254V229Z" fill="#ffffbe" /><path d="M447 216L450 221M437 226L441.500 229M437 256L441.500 254M447 267L450 262M505 216L502 221M515 226L510.500 229M515 256L510.500 254M505 267L502 262" stroke="#ddd" />
                  <text x="475" y="238">Assign Order</text><text x="475" y="248">Types and Size</text>
                </g>
                <g>
                  <path d="M437 295L514 291V342L437 338Z" fill="#b4b4b4" stroke="#777" stroke-width=".6" /><path d="M514 291V342L437 338L441.500 333.500L510 337V295.500Z" fill="#888" />
                  <path d="M441.500 299L510 295.500V337L441.500 333.500Z" fill="#ffffbe" />
                  <text x="475" y="309">Separate Order</text><text x="475" y="318">for Shirt Design</text><text x="475" y="327">and&nbsp; Packing</text>
                </g>
                <g class="tiny"><text x="524" y="326">Original</text><text x="523" y="349">Duplicate</text></g>
                <path d="M524 175H522.500V180.500H524M518.500 303H517V308.500H518.500M501.500 346H500V351.500H501.500" fill="none" stroke="#444" stroke-width=".8" />
                <rect x="649" y="169" width="419" height="107" fill="#000088" stroke="#9a9ae0" stroke-width=".5" /><rect x="655" y="175" width="407" height="95" fill="#ff5500" />
                <rect v-for="h in handles" :key="h.x + '-' + h.y" :x="h.x - 1" :y="h.y - 2" width="4" height="4" fill="#fff" stroke="#333322" />
              </g>
            </svg>
            <div class="vbar">
              <button aria-label="Scroll up"><svg class="i10"><use href="#up" /></svg></button>
              <div class="track"><div class="thumb mid"></div></div>
              <button aria-label="Scroll down"><svg class="i10"><use href="#down" /></svg></button>
            </div>
            <div class="hbar">
              <button aria-label="Scroll left"><svg class="i10"><use href="#left" /></svg></button>
              <div class="track"><div class="thumb"></div></div>
              <button aria-label="Scroll right"><svg class="i10"><use href="#right" /></svg></button>
            </div>
          </section>

          <section class="sheet">
            <h2>Separate - Basic Process</h2>
            <table>
              <colgroup><col class="c0"><col class="c1"><col class="c2"><col class="c3"><col class="c4"></colgroup>
              <thead><tr><th></th><th>Name</th><th>Type</th><th>Cost to Duplicates</th><th># of Duplicates</th></tr></thead>
              <tbody>
                <tr>
                  <th scope="row"><div>1<svg class="i10" viewBox="0 0 10 10"><path d="M2 0L9 5L2 10Z" fill="#000" /></svg></div></th>
                  <td><div>Separate Order for S</div></td><td><div>Duplicate Original</div></td><td><div>0</div></td><td><div>myOrderSize</div></td>
                </tr>
              </tbody>
            </table>
          </section>
        </div>
      </div>

      <footer class="status"><span>Right-click to select a custom color</span><span class="coords">(78, 287)</span></footer>
    </main>

    <div class="taskbar">
      <button class="startbtn" aria-label="Start"><svg viewBox="0 0 16 16"><path d="M1 3L7 2V7.500H1ZM8 1.900L16 1V7.500H8ZM1 8.500H7V14L1 13ZM8 8.500H16V15L8 14.100Z" fill="#fff" /></svg></button>
      <div class="search">
        <label for="search" aria-label="Search"><svg viewBox="0 0 18 18"><circle cx="11" cy="7" r="5" fill="none" stroke="#222" stroke-width="1.300" /><path d="M7.500 10.500L2 16" stroke="#222" stroke-width="1.300" /></svg></label>
        <input id="search" v-model="query" type="text" placeholder="Type here to search">
      </div>
      <button v-for="a in apps" :key="a.label" class="app" :class="{ open: a.open, active: a.active }" :aria-label="a.label"><svg><use :href="'#' + a.icon" /></svg></button>
      <div class="tray">
        <button v-for="s in tray" :key="s.label" :aria-label="s.label"><svg><use :href="'#' + s.icon" /></svg></button>
        <button class="clock"><span>1:16 PM</span><span>10/19/2019</span></button>
        <button class="notify" aria-label="Notifications">
          <svg viewBox="0 0 24 24"><path d="M2 2H17V14H9L6 17.500V14H2Z" fill="#fff" /><path d="M4.500 5H14.500M4.500 8H14.500M4.500 11H10" stroke="#1c2a40" stroke-width="1.200" /><circle cx="16" cy="16" r="7" fill="#2c3848" stroke="#8892a0" /><text x="16" y="20" text-anchor="middle" font-family="Open Sans, sans-serif" font-weight="700" font-size="11" fill="#fff">6</text></svg>
        </button>
      </div>
    </div>
  </div>
</template>

<style>
body { margin: 0; background: #fff; }
</style>

<style scoped>
.desktop { display: flex; flex-direction: column; height: 100vh; min-height: 560px; overflow: hidden; font-family: "Open Sans", "Noto Sans", sans-serif; font-size: 11px; color: #111; background: linear-gradient(#2e4c8a 32px, #c4c0c6 32px); padding-top: 3px; box-sizing: border-box; }
.sprite { display: none; }
button { font: inherit; color: inherit; background: none; border: 0; padding: 0; display: flex; align-items: center; justify-content: center; }
h1, h2 { margin: 0; font-weight: 400; }
svg { flex: none; display: block; }
.i16 { width: 16px; height: 16px; }
.i14 { width: 14px; height: 14px; }
.i10 { width: 10px; height: 10px; }

.window { flex: 1; min-height: 0; display: flex; flex-direction: column; background: #fff; margin-right: 2px; border-left: 1px solid #8a8a94; }
.titlebar { display: flex; align-items: center; height: 27px; padding-left: 7px; gap: 4px; }
.titlebar h1 { flex: 1; font-size: 11px; color: #8c8c8c; white-space: nowrap; }
.caption { display: flex; }
.caption button { width: 43px; height: 26px; }
.menubar { display: flex; align-items: center; height: 18px; padding-left: 6px; color: #555; border-bottom: 1px solid #eee; box-sizing: border-box; }
.menubar > button { margin-left: 12px; height: 18px; }
.menubar > .i16 + button { margin-left: 6px; }
.mdi { display: flex; gap: 2px; margin-left: auto; padding-right: 2px; }
.mdi button { width: 16px; height: 16px; background: #e6e6e6; }

.toolrow { display: flex; height: 28px; margin-bottom: 1px; padding-left: 2px; }
.band { display: flex; align-items: center; background: #f0f0f0; border-right: 1px solid #a0a0a0; border-bottom: 1px solid #b8b8b8; padding-right: 6px; }
.grip { width: 4px; height: 22px; margin: 0 2px; background: radial-gradient(circle, #bbb 1px, transparent 1px) 0 0 / 4px 4px; }
.grip.tight { margin: 0 1px; }
.grip.wide { margin: 0 4px; }
.sep { width: 1px; height: 20px; margin: 0 3px; background: #a8a8a8; }
.group { display: flex; }
.n1 { width: 22px; } .n2 { width: 43px; } .n3 { width: 65px; } .n4 { width: 86px; } .n5 { width: 108px; } .n6 { width: 130px; } .n8 { width: 172px; }
.d1 { width: 35px; } .d3 { width: 104px; } .d5 { width: 173px; }
.tool { flex: 1; height: 22px; }
.tool.on { background: #c9dcf5; box-shadow: inset 0 0 0 1px #a8c4e8; }
.drop { position: relative; flex: 1; display: flex; }
.arrow { width: 13px; height: 22px; }
.arrow::before { content: ""; border: 4px solid transparent; border-top-color: #111; border-bottom: 0; }
.zoom { margin: 0 4px 0 13px; }
.combo { position: relative; display: flex; align-items: center; width: 75px; height: 20px; box-sizing: border-box; background: #fff; border: 1px solid #8a8a8a; }
.combo select { appearance: none; width: 100%; border: 0; padding: 0 0 0 1px; background: none; font: 10px "Liberation Sans", Arial, sans-serif; color: #111; }
.combo svg { position: absolute; right: 3px; pointer-events: none; }
.speed { appearance: none; width: 103px; height: 22px; margin: 0 6px 0 5px; background: linear-gradient(#c8c8c8, #e4e4e4) center 8px / 100% 3px no-repeat, linear-gradient(#bbb, #bbb) 3px 17px / 1px 3px no-repeat, linear-gradient(#bbb, #bbb) 99px 17px / 1px 3px no-repeat; }
.speed::-webkit-slider-thumb { appearance: none; width: 6px; height: 10px; margin-bottom: 3px; background: #1878c0; border-radius: 0 0 3px 3px; }

.palette { position: absolute; z-index: 2; left: 2px; top: 21px; width: 163px; padding: 3px 1px 2px 3px; background: #f0f0f0; border-right: 2px solid #8c8c8c; border-bottom: 2px solid #8c8c8c; }
.swatches { display: grid; grid-template-columns: repeat(8, 1fr); grid-auto-rows: 19px; gap: 2px; padding-bottom: 1px; border-bottom: 1px solid #b0b0b0; }
.swatches button { border: 1px solid #707070; box-shadow: inset 0 0 0 1px rgba(120, 120, 120, 0.2); }
.swatches .hot { border-color: #c8c8c8; outline: 1px solid #111; }
.more { width: 100%; height: 21px; margin-top: 3px; background: #e1e1e1; border: 1px solid #adadad; font: 10px "Liberation Sans", Arial, sans-serif; }
.cursor { position: absolute; left: 32px; top: 47px; width: 12px; height: 16px; }

.workspace { flex: 1; min-height: 0; display: flex; background: #f0f0f0; }
.project { width: 174px; flex: none; display: flex; flex-direction: column; box-sizing: border-box; padding: 0 10px 5px 5px; }
.project-head { display: flex; align-items: center; justify-content: space-between; height: 14px; margin: 0 -3px 1px -2px; padding: 0 3px; border: 1px solid #b0b0b0; border-radius: 2px; box-sizing: border-box; font-size: 10px; line-height: 12px; }
.project-body { flex: 1; min-height: 0; display: flex; flex-direction: column; border: 1px solid #333; box-sizing: border-box; background: #fff; }
.panel { flex: none; height: 19px; padding: 0 2px 0 4px; background: #f0f0f0; border-top: 1px solid #333; box-sizing: border-box; font: 12px "Liberation Sans", Arial, sans-serif; }
.panel:first-child { border-top: 0; border-bottom: 1px solid #333; }
.panel span { flex: 1; text-align: center; padding-right: 7px; }
.panel svg + span:last-child { padding-right: 21px; }
.shelf { flex: 1; min-height: 0; display: flex; }
.modules { flex: 1; margin: 0; padding: 7px 1px 0 0; list-style: none; overflow: hidden; display: grid; grid-template-columns: 1fr 1fr; grid-auto-rows: 70px; }
.modules li { display: flex; flex-direction: column; align-items: center; gap: 6px; text-align: center; line-height: 14px; }
.modules li span { padding: 0 2px; }
.modules .selected span { background: #f0f0f0; }
.glyph { width: 30px; height: 23px; }
.vbar { width: 14px; flex: none; display: flex; flex-direction: column; background: #f0f0f0; }
.shelf .vbar { margin-right: 2px; }
.vbar button { width: 14px; height: 16px; }
.track { flex: 1; display: flex; }
.vbar .track { flex-direction: column; }
.thumb { background: #cdcdcd; }
.tall { height: 65%; }
.vbar .mid { height: 16px; margin-top: 180px; }

.model { flex: 1; min-width: 0; display: flex; flex-direction: column; }
.canvas-pane { flex: 1; min-height: 0; display: grid; grid-template: minmax(0, 1fr) 14px / minmax(0, 1fr) 14px; border-top: 2px solid #777; border-left: 1px solid #777; background: #f0f0f0; margin-right: 4px; }
.canvas { width: 100%; height: 100%; background: #fff; }
.canvas text { font: 9px "Liberation Sans", Arial, sans-serif; fill: #1c1c5c; text-anchor: middle; }
.canvas .tiny text { font-size: 5px; fill: #222; }
.wire { fill: none; stroke: #222; }
.port { fill: #111; }
.hbar { display: flex; }
.hbar button { width: 16px; height: 14px; }
.hbar .thumb { width: 17px; margin-left: 53%; }
.sheet { flex: none; height: 137px; margin: 6px 0 3px; background: #fff; border-left: 1px solid #777; border-top: 1px solid #777; }
.sheet h2 { height: 22px; padding-left: 2px; background: #a0a0a0; font: 10px/24px "Liberation Sans", Arial, sans-serif; }
table { table-layout: fixed; width: 381px; border-collapse: collapse; font: 10px "Liberation Sans", Arial, sans-serif; color: #111; }
.c0 { width: 39px; } .c1 { width: 69px; } .c2 { width: 109px; } .c3 { width: 89px; } .c4 { width: 75px; }
th, td { padding: 0 0 0 2px; text-align: left; font-weight: 400; border-right: 1px solid #555; white-space: nowrap; }
thead th { height: 17px; background: #f2f2f2; border-bottom: 1px solid #555; padding-left: 2px; }
tbody td { background: #000; color: #eee; border-right: 1px dotted #888; }
tbody td div { height: 18px; line-height: 14px; overflow: hidden; white-space: normal; }
tbody th { background: #f2f2f2; border: 2px solid #000; padding: 0 0 0 1px; }
tbody th div { display: flex; gap: 8px; height: 15px; line-height: 12px; }
tbody th svg { margin-top: 3px; }

.status { display: flex; justify-content: space-between; align-items: center; height: 18px; flex: none; background: #f0f0f0; border-top: 1px solid #d4d4d4; border-bottom: 1px solid #999; box-sizing: border-box; padding: 0 34px 0 2px; }
.coords { font-size: 10px; }

.taskbar { height: 38px; flex: none; display: flex; align-items: stretch; background: linear-gradient(90deg, #20323e, #22343f 40%, #1b2c3c 70%, #1c2844); color: #fff; }
.startbtn { width: 45px; }
.startbtn svg { width: 16px; height: 16px; }
.search { width: 322px; display: flex; align-items: center; background: #f2f2f2; border-bottom: 1px solid #aaa; box-sizing: border-box; gap: 10px; padding-left: 10px; }
.search svg { width: 18px; height: 18px; }
.search input { flex: 1; min-width: 0; border: 0; padding: 0; background: none; font: 13px "Open Sans", "Noto Sans", sans-serif; outline: 0; }
.search input::placeholder { color: #444; opacity: 1; }
.app { width: 46px; border-bottom: 2px solid transparent; border-top: 2px solid transparent; box-sizing: border-box; }
.app svg { width: 22px; height: 22px; }
.app.active { background: #4b5c68; }
.app.open { border-bottom-color: #76b9ed; }
.tray { margin-left: auto; display: flex; padding-right: 12px; }
.tray button { width: 30px; }
.tray svg { width: 22px; height: 22px; }
.tray .clock { width: 60px; flex-direction: column; font-size: 10px; line-height: 17px; }
.tray .notify { width: 37px; }
.notify svg { width: 24px; height: 24px; }
</style>
